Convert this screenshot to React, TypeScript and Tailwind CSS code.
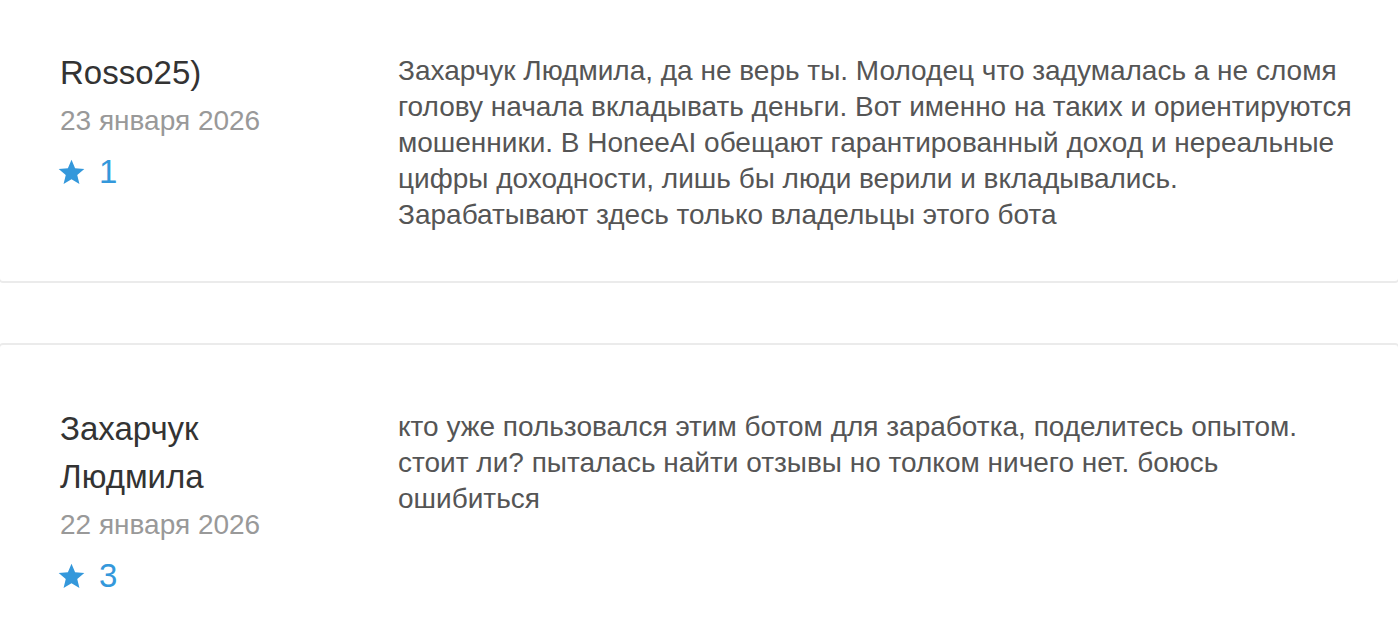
import React from "react";

const reviews = [
  {
    id: 1,
    author: "Rosso25)",
    date: "23 января 2026",
    rating: 1,
    text: "Захарчук Людмила, да не верь ты. Молодец что задумалась а не сломя голову начала вкладывать деньги. Вот именно на таких и ориентируются мошенники. В HoneeAI обещают гарантированный доход и нереальные цифры доходности, лишь бы люди верили и вкладывались.\nЗарабатывают здесь только владельцы этого бота",
  },
  {
    id: 2,
    author: "Захарчук Людмила",
    date: "22 января 2026",
    rating: 3,
    text: "кто уже пользовался этим ботом для заработка, поделитесь опытом. стоит ли? пыталась найти отзывы но толком ничего нет. боюсь ошибиться",
  },
];

const StarIcon = () => (
  <svg viewBox="0 0 24 24" className="-ml-[2px] h-[27px] w-[27px]" fill="currentColor">
    <path d="M12 0.6L15.2 8.2L23.4 8.9L17.1 14.3L19.05 22.3L12 18L4.95 22.3L6.9 14.3L0.6 8.9L8.8 8.2Z" />
  </svg>
);

export default function App() {
  return (
    <div className="min-h-screen overflow-hidden bg-white font-['Liberation_Sans',Arial,sans-serif]">
      <div className="-mx-[2px] -mt-[13px] flex flex-col gap-[60px]">
        {reviews.map((review) => (
          <div
            key={review.id}
            className="rounded-[5px] border-2 border-[#ebebeb] bg-white pl-[60px] pt-[60px] pb-[48px]"
          >
            <div className="grid grid-cols-[338px_958px]">
              <div className="pr-[60px]">
                <div className="text-[33px] leading-[48px] text-[#333]">
                  {review.author}
                </div>
                <div className="mt-[4px] text-[28px] leading-[40px] text-[#999]">
                  {review.date}
                </div>
                <div className="mt-[11px] flex items-center gap-[14px] text-[33px] leading-[40px] text-[#3498db]">
                  <StarIcon />
                  <span>{review.rating}</span>
                </div>
              </div>
              <p className="mt-[4px] whitespace-pre-line text-[28px] leading-[36px] text-[#555]">
                {review.text}
              </p>
            </div>
          </div>
        ))}
      </div>
    </div>
  );
}
